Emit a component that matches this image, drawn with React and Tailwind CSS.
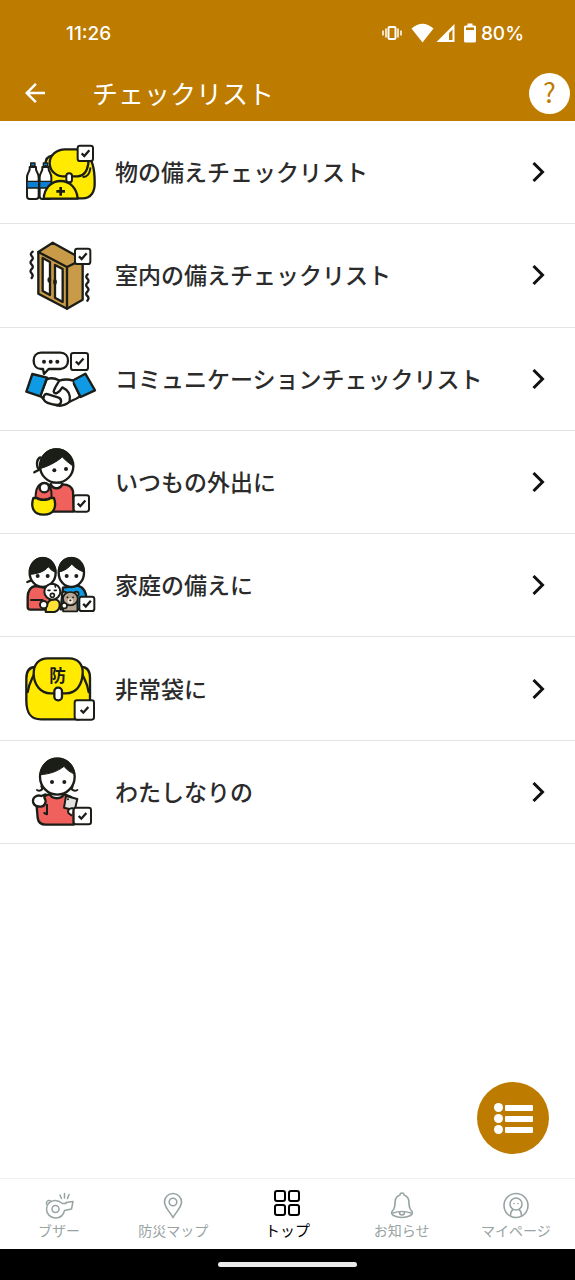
import { MdArrowBack } from 'react-icons/md';

const INK = '#1b1d17';
const YELLOW = '#ffea00';
const RED = '#f0605c';
const BLUE = '#0f9ae6';

const CheckMark = ({ x, y, w = 46, h = 46 }) => (
  <g strokeWidth="6">
    <rect x={x} y={y} width={w} height={h} rx="7" fill="#fff" />
    <path
      d={`M${x + w / 2 - 11} ${y + h / 2} l8 8 l15 -17`}
      fill="none"
      strokeWidth="7"
      strokeLinecap="butt"
      strokeLinejoin="miter"
    />
  </g>
);

const Picture = ({ top, children }) => (
  <svg
    viewBox={`0 ${top} 270 240`}
    className="h-20 w-[90px] shrink-0"
    fill="none"
    stroke={INK}
    strokeWidth="7"
    strokeLinecap="round"
    strokeLinejoin="round"
    aria-hidden="true"
  >
    {children}
  </svg>
);

const Bottle = ({ x }) => (
  <g strokeWidth="6">
    <path
      d={`M${x + 8} 96 V103 C${x + 7} 111 ${x} 115 ${x} 127 V184 Q${x} 192 ${x + 8} 192 H${x + 27} Q${x + 35} 192 ${x + 35} 184 V127 C${x + 35} 115 ${x + 28} 111 ${x + 27} 103 V96 Z`}
      fill="#fff"
    />
    <rect x={x} y="139" width="35" height="20" fill="#0c7fd0" strokeWidth="4" />
    <rect x={x + 11} y="84" width="13" height="9" fill="#0c7fd0" strokeWidth="4" />
  </g>
);

const GoodsPicture = () => (
  <Picture top={-9}>
    <path
      d="M112 62 C96 63 91 75 91 92 L96 190 H202 C230 190 240 168 239 142 C239 112 233 76 218 62 Z"
      fill={YELLOW}
    />
    <path d="M226 100 C224 117 218 125 205 126" strokeWidth="6" />
    <path
      d="M104 84 C104 60 126 43 150 43 H190 C212 48 223 68 220 86 C216 110 204 124 188 124 H143 C121 123 104 106 104 84 Z"
      fill={YELLOW}
    />
    <rect x="154" y="115" width="17" height="27" rx="8" fill="#fff" strokeWidth="6" />
    <Bottle x={36} />
    <Bottle x={74} />
    <path d="M86 191 C88 158 110 138 137 138 C165 138 186 160 188 191 Z" fill={YELLOW} />
    <path d="M137 156 V182 M124 169 H150" strokeWidth="8" strokeLinecap="butt" />
    <CheckMark x={188} y={32} />
  </Picture>
);

const FurniturePicture = () => (
  <Picture top={1}>
    <path d="M70 52 L113 24 L203 74 V195 L156 222 L70 177 Z" fill="#c99a48" />
    <path d="M70 52 L156 97 V222 M156 97 L203 74" />
    <path d="M83 70 L105 82 V181 L83 169 Z" fill="#fff" />
    <path d="M120 91 L143 103 V202 L120 189 Z" fill="#fff" />
    <path d="M103 133 V138 M120 139 V144" strokeWidth="11" />
    <path
      d="M53 51 q-9 7 -3 13 q7 7 0 13 q-7 7 0 13 q7 7 0 13 q-7 7 0 13 q6 6 0 14"
      strokeWidth="7"
    />
    <path
      d="M218 119 q-8 7 -1 13 q7 7 0 13 q-7 7 0 13 q7 7 0 13 q-7 7 0 13 q7 6 0 14"
      strokeWidth="7"
    />
    <CheckMark x={180} y={42} />
  </Picture>
);

const TalkPicture = () => (
  <Picture top={-4}>
    <path
      d="M78 37 H136 C151 37 159 48 159 61 C159 75 150 86 136 86 H101 L87 101 L84 86 H78 C64 86 56 75 56 61 C56 48 64 37 78 37 Z"
      fill="#fff"
    />
    <g fill={INK} stroke="none">
      <circle cx="87" cy="64" r="6" />
      <circle cx="107" cy="64" r="6" />
      <circle cx="127" cy="64" r="6" />
    </g>
    <path
      d="M95 117 C108 111 121 114 132 120 L174 122 L195 168 C183 177 172 180 164 184 C152 194 137 198 125 195 L90 181 L76 166 Z"
      fill="#fff"
    />
    <path d="M52 101 L96 112 L76 168 L34 154 Z" fill={BLUE} />
    <path d="M211 100 L240 150 L197 170 L172 121 Z" fill={BLUE} />
    <path
      d="M174 121 C160 116 145 117 133 121 C126 132 117 144 116 154 C119 164 132 158 142 141 C155 147 168 160 164 182"
      fill="#fff"
    />
    <path
      d="M86 176 C84 164 91 159 100 162 L131 172 C143 178 139 194 127 194 C113 193 89 188 86 176 Z"
      fill="#fff"
    />
    <CheckMark x={168} y={38} w={51} h={51} />
  </Picture>
);

const OutingPicture = () => (
  <Picture top={8}>
    <path
      d="M104 137 C88 137 76 150 73 170 L76 190 L104 190 V217 H176 L174 156 C170 139 155 135 143 135 Z"
      fill={RED}
    />
    <path d="M107 134 C113 151 136 151 142 134" fill="#fff" />
    <path d="M76 54 C65 58 62 78 72 91 L58 99" />
    <circle cx="125" cy="80" r="50" fill="#fff" />
    <path
      d="M75 88 C70 52 94 28 124 28 C154 28 175 51 176 82 C165 73 153 65 142 53 C124 69 97 82 75 88 Z"
      fill={INK}
      strokeWidth="3"
    />
    <g fill={INK} stroke="none">
      <circle cx="118" cy="93" r="6" />
      <circle cx="153" cy="89" r="6" />
    </g>
    <path d="M62 180 C60 144 74 131 88 131 C104 131 112 150 109 180" strokeWidth="6" fill={RED} />
    <circle cx="88" cy="145" r="14" fill="#fff" />
    <path
      d="M55 176 H66 C74 183 98 183 106 176 H117 C126 203 117 226 86 226 C55 226 46 203 55 176 Z"
      fill={YELLOW}
    />
    <CheckMark x={176} y={168} w={46} h={49} />
  </Picture>
);

const FamilyPicture = () => (
  <Picture top={1}>
    <path d="M62 124 C47 126 38 139 38 158 V187 Q38 195 46 195 H118 V134 Z" fill={RED} />
    <path d="M144 129 L190 123 C207 130 214 144 214 162 V194 H137 Z" fill={BLUE} />
    <path d="M48 166 H83" strokeWidth="6" />
    <path d="M49 107 L37 112" />
    <ellipse cx="83" cy="84" rx="39" ry="43" fill="#fff" />
    <path
      d="M44 93 C41 59 57 38 83 38 C108 38 122 57 122 83 C113 80 106 74 100 66 C88 82 65 88 44 89 Z"
      fill={INK}
      strokeWidth="3"
    />
    <ellipse cx="169" cy="84" rx="38" ry="43" fill="#fff" />
    <path
      d="M131 82 C129 55 145 38 169 38 C194 38 209 57 208 82 C195 79 180 69 170 58 C161 70 147 80 131 82 Z"
      fill={INK}
      strokeWidth="3"
    />
    <g fill={INK} stroke="none">
      <circle cx="68" cy="94" r="6" />
      <circle cx="98" cy="94" r="6" />
      <circle cx="155" cy="94" r="6" />
      <circle cx="184" cy="94" r="6" />
    </g>
    <path d="M92 202 C91 180 101 164 119 164 C139 166 139 195 119 202 Z" fill="#ffe138" strokeWidth="6" />
    <circle cx="112" cy="141" r="24" fill="#fff" strokeWidth="6" />
    <path d="M112 118 q11 1 9 9" strokeWidth="5" />
    <circle cx="112" cy="152" r="6" strokeWidth="5" />
    <path d="M99 137 h6 M118 137 h6" strokeWidth="5" />
    <circle cx="86" cy="180" r="11" fill="#fff" strokeWidth="6" />
    <g fill="#b8a593" strokeWidth="5">
      <path d="M146 171 H187 V200 H144 Z" />
      <circle cx="148" cy="148" r="7" />
      <circle cx="184" cy="148" r="7" />
      <ellipse cx="166" cy="162" rx="22" ry="20" />
    </g>
    <circle cx="166" cy="169" r="8" fill="#f2e6d8" stroke="none" />
    <path d="M157 158 h1 M174 158 h1 M165 167 h2" strokeWidth="5" />
    <circle cx="148" cy="183" r="8" fill="#fff" strokeWidth="5" />
    <CheckMark x={193} y={156} w={45} h={43} />
  </Picture>
);

const BagPicture = () => (
  <Picture top={-4}>
    <path
      d="M61 50 C41 50 34 62 34 85 V150 C34 191 48 207 78 207 H190 C215 205 226 182 225 150 V83 C225 61 217 50 199 50 Z"
      fill={YELLOW}
    />
    <path d="M57 72 C50 89 42 99 38 125 M202 72 C209 89 217 99 221 125" />
    <path
      d="M56 70 C56 40 73 24 98 24 H163 C188 24 205 42 203 70 C201 104 184 129 153 129 H106 C77 129 57 104 56 70 Z"
      fill={YELLOW}
    />
    <text
      x="128"
      y="94"
      textAnchor="middle"
      fill={INK}
      stroke="none"
      className="font-['Noto_Sans_CJK_JP',sans-serif] text-[50px] font-bold"
    >
      防
    </text>
    <rect x="118" y="112" width="23" height="38" rx="11" fill="#fff" />
    <CheckMark x={179} y={150} w={58} h={58} />
  </Picture>
);

const MyPicture = () => (
  <Picture top={7}>
    <path
      d="M100 135 C82 139 66 149 65 170 L68 205 Q71 225 92 225 H176 V150 C168 141 159 137 151 135 Z"
      fill={RED}
    />
    <path d="M96 165 V194 L88 190" strokeWidth="6" />
    <path d="M104 133 C112 150 139 150 147 133" fill="#fff" />
    <path d="M79 109 L82 119 Q74 126 66 121 M173 109 L170 119 Q178 126 187 121" strokeWidth="6" />
    <ellipse cx="127" cy="81" rx="52" ry="54" fill="#fff" />
    <path
      d="M76 75 C79 42 98 25 127 25 C155 25 176 43 179 73 C166 69 155 60 147 50 C128 65 102 74 76 75 Z"
      fill={INK}
      strokeWidth="3"
    />
    <g fill={INK} stroke="none">
      <circle cx="111" cy="97" r="6" />
      <circle cx="148" cy="97" r="6" />
    </g>
    <path
      d="M55 160 C50 144 65 134 79 139 L92 134 L88 144 C96 155 90 171 77 171 C66 171 58 168 55 160 Z"
      fill="#fff"
    />
    <path d="M153 139 L187 148 L179 182 L147 174 Z" fill="#e4e4e4" strokeWidth="6" />
    <circle cx="159" cy="149" r="3" fill={INK} stroke="none" />
    <path d="M174 176 C163 174 157 182 160 190 L169 197" fill="#fff" strokeWidth="6" />
    <CheckMark x={176} y={174} w={52} h={50} />
  </Picture>
);

const WhistleIcon = () => (
  <g strokeWidth="1.500">
    <path d="M12 10.500 C15 10.500 17 11.500 19.500 13.500 L23 13.500 V12.500 L30 11.500 L28.500 19 L21.500 20.500 C20.500 25 17 28 12.500 28 C7.500 28 3.500 24 3.500 19 C3.500 14.500 7 10.500 12 10.500 Z" />
    <circle cx="12.500" cy="19" r="3.500" />
    <path d="M4 14.500 A2.500 2.500 0 1 1 8 11.500 M17 5 L18.500 8.500 M21.500 3.500 V8 M26 4.500 L24.500 8.500" />
  </g>
);

const PinIcon = () => (
  <>
    <path d="M16 27.500 C13 22 7.500 17.500 7.500 12 A8.500 8.500 0 0 1 24.500 12 C24.500 17.500 19 22 16 27.500 Z" />
    <circle cx="16" cy="12" r="3.800" />
  </>
);

const GridIcon = () => (
  <g strokeWidth="2">
    <rect x="4" y="1" width="10" height="10" rx="2" />
    <rect x="18" y="1" width="10" height="10" rx="2" />
    <rect x="4" y="15" width="10" height="10" rx="2" />
    <rect x="18" y="15" width="10" height="10" rx="2" />
  </g>
);

const BellIcon = () => (
  <>
    <path d="M14 5 A2 2 0 0 1 18 5 C21.500 6 23 9 23 13 C23 17 23.500 19 26 21.500 C28 25 22 27.500 16 27.500 C10 27.500 4 25 6 21.500 C8.500 19 9 17 9 13 C9 9 10.500 6 14 5 Z" />
    <path d="M7 23 Q16 20 25 23" />
    <path d="M13.500 22.500 Q13.500 25 16 25 Q18.500 25 18.500 22.500" />
  </>
);

const ProfileIcon = () => (
  <>
    <circle cx="16" cy="15.500" r="12" />
    <circle cx="16" cy="14" r="6" />
    <path d="M10.500 26 C10.500 22 11.500 20.500 13 19.500 M21.500 26 C21.500 22 20.500 20.500 19 19.500" />
    <path d="M14 13.500 h0.100 M18 13.500 h0.100" />
  </>
);

const CHECKLISTS = [
  { label: '物の備えチェックリスト', Icon: GoodsPicture },
  { label: '室内の備えチェックリスト', Icon: FurniturePicture },
  { label: 'コミュニケーションチェックリスト', Icon: TalkPicture },
  { label: 'いつもの外出に', Icon: OutingPicture },
  { label: '家庭の備えに', Icon: FamilyPicture },
  { label: '非常袋に', Icon: BagPicture },
  { label: 'わたしなりの', Icon: MyPicture }
];

const TABS = [
  { label: 'ブザー', Icon: WhistleIcon },
  { label: '防災マップ', Icon: PinIcon },
  { label: 'トップ', Icon: GridIcon, active: true },
  { label: 'お知らせ', Icon: BellIcon },
  { label: 'マイページ', Icon: ProfileIcon }
];

const StatusBar = () => (
  <div className="flex h-[65px] items-center justify-between pl-[66px] pr-[51px] font-['Inter',sans-serif] text-[19px] font-medium">
    <span className="pt-[3px]">11:26</span>
    <div className="flex items-center">
      <svg
        viewBox="0 0 20 16"
        className="mr-[9px] h-4 w-5"
        fill="none"
        stroke="currentColor"
        strokeWidth="2"
        aria-hidden="true"
      >
        <rect x="6.500" y="2" width="7" height="12" rx="1" />
        <path d="M4 3.500 V12.500 M1 5.500 V10.500 M16 3.500 V12.500 M19 5.500 V10.500" strokeWidth="1.500" />
      </svg>
      <svg viewBox="0 0 23 20" className="mr-0.5 h-5 w-[23px]" fill="currentColor" aria-hidden="true">
        <path d="M0.500 5.500 Q11.500 -4 22.500 5.500 L11.500 19.500 Z" />
      </svg>
      <svg viewBox="0 0 19 20" className="mr-[9px] h-5 w-[19px]" fill="currentColor" aria-hidden="true">
        <path fillRule="evenodd" d="M18.500 1 V19 H0.500 Z M16.500 6.500 L13 10 V17 H16.500 Z" />
      </svg>
      <svg viewBox="0 0 12 20" className="mr-[5px] h-5 w-3" fill="currentColor" aria-hidden="true">
        <path
          fillRule="evenodd"
          d="M3.500 0.500 H8.500 V2.500 H10.500 Q12 2.500 12 4 V18 Q12 19.500 10.500 19.500 H1.500 Q0 19.500 0 18 V4 Q0 2.500 1.500 2.500 H3.500 Z M2 4.500 V7 H10 V4.500 Z"
        />
      </svg>
      <span className="pt-[3px]">80%</span>
    </div>
  </div>
);

const App = () => {
  return (
    <div className="flex min-h-screen flex-col bg-white font-['Noto_Sans_CJK_JP',sans-serif]">
      <header className="bg-[#bd7b00] text-white">
        <StatusBar />
        <div className="flex h-14 items-center pl-5 pr-[5px]">
          <button type="button" aria-label="戻る">
            <MdArrowBack size={30} />
          </button>
          <h1 className="ml-[42px] flex-1 text-[26px] leading-8">チェックリスト</h1>
          <button
            type="button"
            aria-label="ヘルプ"
            className="flex size-[41px] items-center justify-center rounded-full bg-white pb-1 text-[27px] leading-none text-[#bd7b00]"
          >
            ?
          </button>
        </div>
      </header>

      <main className="relative flex-1">
        <ul className="grid min-h-[723px] auto-rows-fr">
          {CHECKLISTS.map(({ label, Icon }) => (
            <li key={label} className="border-b border-[#e3e3e3]">
              <a href="#" className="flex h-full items-center pl-[15px] pr-[30px]">
                <Icon />
                <span className="ml-2.5 flex-1 pb-0.5 text-[23px] font-medium leading-8 text-[#2b2b2b]">
                  {label}
                </span>
                <svg
                  viewBox="0 0 13 20"
                  className="h-5 w-[13px]"
                  fill="none"
                  stroke="#111"
                  strokeWidth="3"
                  aria-hidden="true"
                >
                  <path d="M1.500 1 L10.500 10 L1.500 19" />
                </svg>
              </a>
            </li>
          ))}
        </ul>

        <button
          type="button"
          aria-label="メニュー"
          className="absolute bottom-6 right-[26px] size-[72px] rounded-full bg-[#bd7b00] text-white"
        >
          <svg viewBox="0 0 72 72" fill="currentColor" aria-hidden="true">
            <circle cx="21.500" cy="25.500" r="4.500" />
            <circle cx="21.500" cy="36.500" r="4.500" />
            <circle cx="21.500" cy="47.500" r="4.500" />
            <rect x="28" y="23" width="28" height="6" rx="1" />
            <rect x="28" y="34" width="28" height="6" rx="1" />
            <rect x="28" y="45" width="28" height="6" rx="1" />
          </svg>
        </button>
      </main>

      <nav className="grid grid-cols-5 border-t border-[#f2f2f2] px-0.5 py-[11px]">
        {TABS.map(({ label, Icon, active }) => (
          <a
            key={label}
            href="#"
            className={`flex flex-col items-center ${active ? 'text-[15px] text-black' : 'text-sm text-[#98a3a3]'}`}
          >
            <svg
              viewBox="0 0 32 32"
              className="size-8"
              fill="none"
              stroke="currentColor"
              strokeWidth="1.600"
              strokeLinecap="round"
              strokeLinejoin="round"
              aria-hidden="true"
            >
              <Icon />
            </svg>
            <span className="leading-4">{label}</span>
          </a>
        ))}
      </nav>

      <div className="flex h-[31px] items-center justify-center bg-black">
        <div className="h-[5px] w-[139px] rounded-full bg-[#ececec]" />
      </div>
    </div>
  );
};

export default App;
